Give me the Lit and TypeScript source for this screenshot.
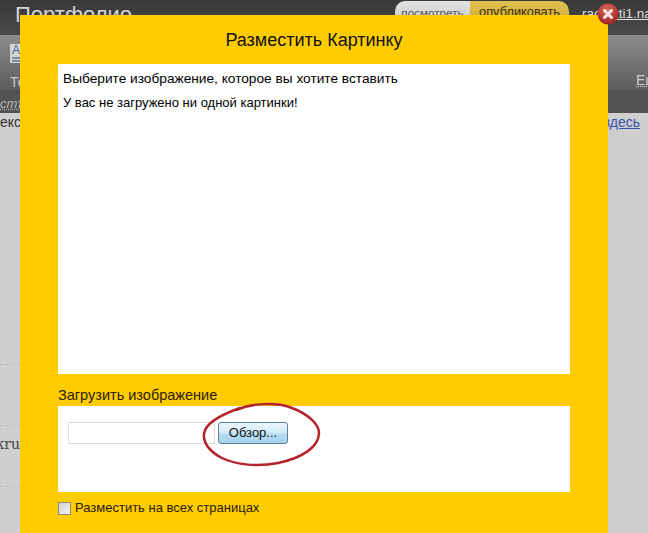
import { LitElement, html, css } from "lit";
import { customElement } from "lit/decorators.js";

@customElement("app-root")
export class AppRoot extends LitElement {
  static styles = css`
    :host {
      display: block;
      position: relative;
      width: 648px;
      height: 533px;
      overflow: hidden;
      background: #cfcfcf;
      font-family: "Liberation Sans", Arial, sans-serif;
      color: #000;
    }
    .page { display: flex; flex-direction: column; height: 533px; }
    .top {
      height: 35px;
      flex: none;
      background: linear-gradient(#383838, #4a4a4a);
      display: flex;
      padding: 1px 0 0 15px;
      box-sizing: border-box;
    }
    .brand { color: #d4d4d4; font-size: 22px; line-height: 28px; }
    .pills {
      margin-left: auto;
      display: flex;
      height: 30px;
      width: 174px;
      border-radius: 10px;
      overflow: hidden;
      text-align: center;
      color: #555;
    }
    .pills .a { width: 75px; background: linear-gradient(#e4e4e4, #bdbdbd); font-size: 11.7px; line-height: 23px; }
    .pills .b { flex: 1; background: linear-gradient(#e0c050, #c9a531); color: #3a3000; font-size: 12.8px; line-height: 22px; }
    .user {
      margin-left: 13px;
      width: 66px;
      overflow: hidden;
      white-space: nowrap;
      font-size: 13.5px;
      line-height: 26px;
      color: #ddd;
      text-decoration: underline;
    }
    .tools {
      height: 55px;
      flex: none;
      box-sizing: border-box;
      background: linear-gradient(#8c8c8c, #5c5c5c);
      display: flex;
      justify-content: space-between;
      padding: 9px 0 0 10px;
      color: #ccc;
      font-size: 14px;
    }
    .tool { display: flex; flex-direction: column; gap: 11px; line-height: 16px; }
    .glyph {
      width: 12px;
      height: 19px;
      box-sizing: border-box;
      padding: 1px 0 0 2px;
      background: #d4d4d4;
      color: #4a6a98;
      font-size: 12px;
      line-height: 11px;
      display: flex;
      flex-direction: column;
      gap: 1px;
    }
    .bar { height: 2px; width: 8px; background: #7a8aa0; }
    .eu { align-self: flex-end; margin: 0 -6px 2px 0; width: 18px; overflow: hidden; text-decoration: underline dotted; line-height: 16px; }
    .strip {
      height: 23px;
      flex: none;
      background: #525252;
      color: #b8b8b8;
      font: italic 13px/28px "Liberation Sans", Arial, sans-serif;
      text-decoration: underline dotted;
    }
    .rest { flex: 1; position: relative; display: flex; flex-direction: column; }
    .line1 {
      display: flex;
      justify-content: space-between;
      font-size: 14px;
      line-height: 19px;
      color: #333;
      padding-right: 8px;
    }
    .line1 a { color: #3a4fa8; text-decoration: underline; }
    .rows { width: 20px; margin-top: 232px; display: flex; flex-direction: column; }
    .row { height: 60px; border-top: 1px dashed #bcbcbc; overflow: hidden; }
    .row.k { font: 14px/36px "DejaVu Serif", serif; color: #444; white-space: nowrap; direction: rtl; }
    .modal {
      position: absolute;
      left: 20px;
      top: 15px;
      width: 588px;
      height: 518px;
      background: #ffcc00;
      box-sizing: border-box;
      padding: 0 38px;
      display: flex;
      flex-direction: column;
    }
    h1 {
      margin: 0;
      height: 49px;
      flex: none;
      font-size: 18px;
      font-weight: 400;
      line-height: 51px;
      text-align: center;
      color: #111;
    }
    .gallery {
      height: 310px;
      flex: none;
      background: #fff;
      padding: 6px 5px 5px;
      box-sizing: border-box;
    }
    .gallery .t { font-size: 13.7px; line-height: 18px; }
    .gallery .s { font-size: 13px; line-height: 14px; margin-top: 8px; }
    .label { height: 32px; flex: none; font-size: 14.5px; line-height: 42px; color: #2a2000; }
    .upload {
      height: 86px;
      flex: none;
      background: #fff;
      box-sizing: border-box;
      padding: 16px 0 0 10px;
      display: flex;
      align-items: flex-start;
    }
    .input {
      width: 147px;
      height: 22px;
      box-sizing: border-box;
      border: 1px solid #dcdcdc;
      background: #fff;
    }
    .btn {
      width: 70px;
      height: 22px;
      margin-left: 3px;
      box-sizing: border-box;
      border: 1px solid #5e8199;
      border-radius: 3px;
      background: linear-gradient(#eaf6fc 0%, #d4ecf8 45%, #b4dcf2 55%, #a6d3ee 100%);
      font-size: 13px;
      line-height: 20px;
      text-align: center;
      color: #111;
    }
    .all {
      display: flex;
      align-items: center;
      gap: 4px;
      margin-top: 8px;
      font-size: 13px;
      line-height: 16px;
      color: #2a2000;
    }
    .box {
      width: 13px;
      height: 13px;
      box-sizing: border-box;
      border: 1px solid #8a8a7a;
      background: linear-gradient(135deg, #cfcfcf, #f4f4f4);
    }
    .ellipse { position: absolute; left: 200px; top: 400px; pointer-events: none; }
    .close { position: absolute; left: 596px; top: 2px; }
  `;

  render() {
    return html`
      <div class="page">
        <div class="top">
          <div class="brand">Портфолио</div>
          <div class="pills">
            <div class="a">посмотреть</div>
            <div class="b">опубликовать</div>
          </div>
          <div class="user">racketti1.narod.ru</div>
        </div>
        <div class="tools">
          <div class="tool">
            <div class="glyph"><span>A</span><div class="bar"></div><div class="bar"></div></div>
            <div>Текст</div>
          </div>
          <div class="eu">Еще</div>
        </div>
        <div class="strip">стъ</div>
        <div class="rest">
          <div class="line1"><span>екст</span><a>здесь</a></div>
          <div class="rows">
            <div class="row"></div>
            <div class="row k">kru</div>
            <div class="row"></div>
          </div>
        </div>
      </div>

      <div class="modal">
        <h1>Разместить Картинку</h1>
        <div class="gallery">
          <div class="t">Выберите изображение, которое вы хотите вставить</div>
          <div class="s">У вас не загружено ни одной картинки!</div>
        </div>
        <div class="label">Загрузить изображение</div>
        <div class="upload">
          <div class="input"></div>
          <div class="btn">Обзор...</div>
        </div>
        <div class="all"><span class="box"></span><span>Разместить на всех страницах</span></div>
      </div>

      <svg class="ellipse" width="124" height="70" viewBox="0 0 124 70" fill="none">
        <path d="M36 10 C52 3 78 2 92 8 C108 14 119 24 119 33 C119 47 102 58 78 63 C58 67 36 65 22 58 C10 52 3 43 4 34 C5 24 20 15 40 8" stroke="#b5222b" stroke-width="2.5"/>
      </svg>

      <svg class="close" width="24" height="24" viewBox="0 0 24 24">
        <defs>
          <radialGradient id="r" cx="45%" cy="30%" r="75%">
            <stop offset="0%" stop-color="#dd6a62"/>
            <stop offset="100%" stop-color="#9c1c1c"/>
          </radialGradient>
        </defs>
        <circle cx="12" cy="12" r="10.5" fill="url(#r)"/>
        <path d="M8.5 8.5 L15.5 15.5 M15.5 8.5 L8.5 15.5" stroke="#fbe6e6" stroke-width="3" stroke-linecap="round"/>
      </svg>
    `;
  }
}
